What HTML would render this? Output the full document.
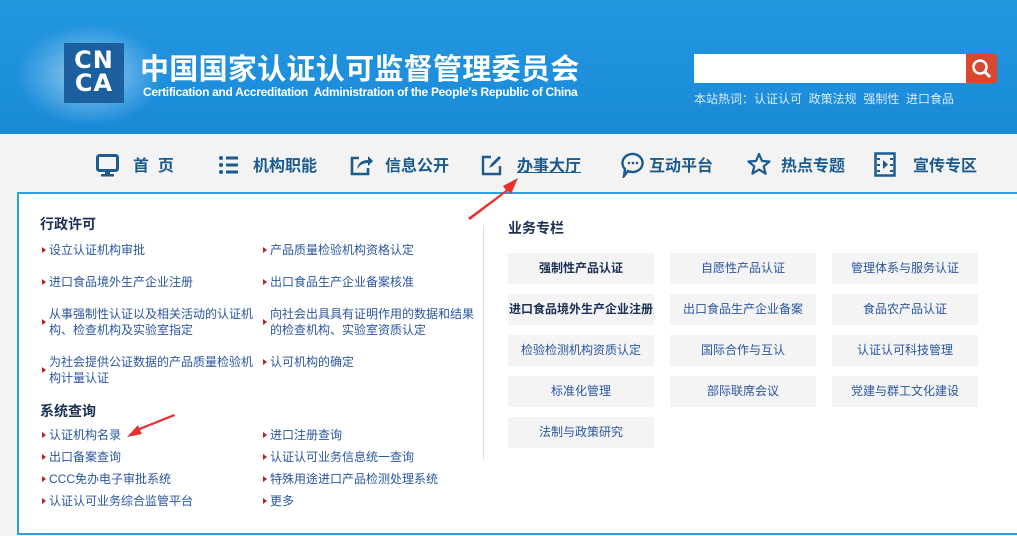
<!DOCTYPE html>
<html><head><meta charset="utf-8"><style>
*{margin:0;padding:0;box-sizing:border-box}
body{width:1017px;height:536px;overflow:hidden;font-family:"Liberation Sans","Noto Sans CJK SC",sans-serif;background:#f3f3f3;position:relative}
.hdr{position:absolute;left:0;top:0;width:1017px;height:134px;background:linear-gradient(180deg,#2596e0 0%,#1d8fdc 60%,#1a8ad8 100%)}
.glow{position:absolute;left:10px;top:20px;width:160px;height:110px;background:radial-gradient(ellipse at center,rgba(255,255,255,.55),rgba(255,255,255,0) 65%)}
.logo{position:absolute;left:64px;top:43px;width:60px;height:60px;background:#1b5f9e;color:#fff;font-weight:900;font-size:24px;line-height:23px;text-align:center;padding-top:6px;letter-spacing:1px;font-family:"DejaVu Sans",sans-serif}
.t1{position:absolute;left:140px;top:46px;color:#fff;font-size:29px;font-weight:bold;letter-spacing:0.3px;white-space:nowrap}
.t2{position:absolute;left:143px;top:85px;color:#fff;font-size:12px;font-weight:bold;letter-spacing:-0.3px;white-space:nowrap}
.search{position:absolute;left:694px;top:54px;width:272px;height:29px;background:#fff}
.sbtn{position:absolute;left:966px;top:54px;width:31px;height:29px;background:#d9472f}
.hot{position:absolute;left:694px;top:90px;color:#d9ecfa;font-size:12px;white-space:nowrap}
.nav{position:absolute;top:152px;font-size:16px;font-weight:bold;color:#1b5b8e;white-space:nowrap}
.box{position:absolute;left:17px;top:192px;width:1010px;height:343px;background:#fff;border:2px solid #2aa0de;border-right:none}
.h{position:absolute;font-size:14px;font-weight:bold;color:#1b3055}
.it{position:absolute;font-size:12px;color:#2a56a0;line-height:16px;white-space:nowrap}
.it:before{content:"";position:absolute;left:-7px;top:5px;border-left:4px solid #b3202a;border-top:3px solid transparent;border-bottom:3px solid transparent}
.it.m:before{top:13px}
.div{position:absolute;left:483px;top:225px;width:1px;height:234px;background:#ddd}
.b{position:absolute;width:146px;height:31px;background:#f4f4f4;font-size:12px;color:#2a56a0;text-align:center;line-height:31px;white-space:nowrap}
.b.k{font-weight:bold;color:#1b3055}
</style></head><body>
<div class="hdr"><div class="glow"></div>
<div class="logo">CN<br>CA</div>
<div class="t1">中国国家认证认可监督管理委员会</div>
<div class="t2">Certification and Accreditation&nbsp; Administration of the People's Republic of China</div>
<div class="search"></div>
<div class="sbtn"><svg width="31" height="29"><circle cx="14" cy="13" r="6.5" fill="none" stroke="#fff" stroke-width="2.5"/><line x1="19" y1="18" x2="24" y2="23" stroke="#fff" stroke-width="3"/></svg></div>
<div class="hot">本站热词：认证认可&nbsp; 政策法规&nbsp; 强制性&nbsp; 进口食品</div>
</div>
<svg style="position:absolute;left:96px;top:154px" width="24" height="24"><rect x="1.5" y="1.5" width="20" height="15" rx="2" fill="none" stroke="#1b5b8e" stroke-width="3"/><rect x="9" y="17" width="5" height="3" fill="#1b5b8e"/><rect x="5" y="20" width="13" height="2.5" fill="#1b5b8e"/></svg>
<div class="nav" style="left:133px">首&nbsp; 页</div>
<svg style="position:absolute;left:218px;top:154px" width="24" height="22"><g fill="#1b5b8e"><circle cx="3" cy="4" r="2"/><circle cx="3" cy="11" r="2"/><circle cx="3" cy="18" r="2"/><rect x="8" y="2.5" width="12" height="3"/><rect x="8" y="9.5" width="12" height="3"/><rect x="8" y="16.5" width="12" height="3"/></g></svg>
<div class="nav" style="left:253px">机构职能</div>
<svg style="position:absolute;left:349px;top:153px" width="24" height="24"><path d="M10 5H3v16h16v-6" fill="none" stroke="#1b5b8e" stroke-width="2.6"/><path d="M8 16c1-6 5-9 11-9V3l5 5-5 5V10c-5 0-8 2-11 6z" fill="#1b5b8e"/></svg>
<div class="nav" style="left:385px">信息公开</div>
<svg style="position:absolute;left:481px;top:154px" width="22" height="22"><path d="M10 3H2v17h17v-8" fill="none" stroke="#1b5b8e" stroke-width="2.4"/><path d="M8 14l2-4 8-8 2 2-8 8z" fill="#1b5b8e"/></svg>
<div class="nav" style="left:517px;text-decoration:underline">办事大厅</div>
<svg style="position:absolute;left:621px;top:152px" width="24" height="26"><path d="M12 2a10 9 0 1 1-5 17l-4 5 1-7A10 9 0 0 1 12 2z" fill="none" stroke="#1b5b8e" stroke-width="2.4"/><g fill="#1b5b8e"><circle cx="8" cy="11" r="1.3"/><circle cx="12" cy="11" r="1.3"/><circle cx="16" cy="11" r="1.3"/></g></svg>
<div class="nav" style="left:649px">互动平台</div>
<svg style="position:absolute;left:747px;top:152px" width="24" height="24"><path d="M12 2l3 7 7.5.5-5.8 4.8 1.9 7.4L12 17.6 5.4 21.7l1.9-7.4L1.5 9.5 9 9z" fill="none" stroke="#1b5b8e" stroke-width="2.2" stroke-linejoin="round"/></svg>
<div class="nav" style="left:781px">热点专题</div>
<svg style="position:absolute;left:874px;top:152px" width="22" height="25"><rect x="1.5" y="1.5" width="19" height="22" fill="none" stroke="#1b5b8e" stroke-width="2.5"/><g fill="#1b5b8e"><rect x="3" y="6" width="3" height="2"/><rect x="3" y="12" width="3" height="2"/><rect x="3" y="18" width="3" height="2"/><rect x="16" y="6" width="3" height="2"/><rect x="16" y="12" width="3" height="2"/><rect x="16" y="18" width="3" height="2"/><path d="M9 8l5 4.5-5 4.5z"/></g></svg>
<div class="nav" style="left:913px">宣传专区</div>

<div class="box"></div>
<div class="h" style="left:40px;top:214px">行政许可</div>
<div class="it" style="left:49px;top:242px">设立认证机构审批</div>
<div class="it" style="left:270px;top:242px">产品质量检验机构资格认定</div>
<div class="it" style="left:49px;top:274px">进口食品境外生产企业注册</div>
<div class="it" style="left:270px;top:274px">出口食品生产企业备案核准</div>
<div class="it m" style="left:49px;top:306px">从事强制性认证以及相关活动的认证机<br>构、检查机构及实验室指定</div>
<div class="it m" style="left:270px;top:306px">向社会出具具有证明作用的数据和结果<br>的检查机构、实验室资质认定</div>
<div class="it m" style="left:49px;top:354px">为社会提供公证数据的产品质量检验机<br>构计量认证</div>
<div class="it" style="left:270px;top:354px">认可机构的确定</div>
<div class="h" style="left:40px;top:401px">系统查询</div>
<div class="it" style="left:49px;top:427px">认证机构名录</div>
<div class="it" style="left:270px;top:427px">进口注册查询</div>
<div class="it" style="left:49px;top:449px">出口备案查询</div>
<div class="it" style="left:270px;top:449px">认证认可业务信息统一查询</div>
<div class="it" style="left:49px;top:471px">CCC免办电子审批系统</div>
<div class="it" style="left:270px;top:471px">特殊用途进口产品检测处理系统</div>
<div class="it" style="left:49px;top:493px">认证认可业务综合监管平台</div>
<div class="it" style="left:270px;top:493px">更多</div>
<div class="div"></div>
<div class="h" style="left:508px;top:218px">业务专栏</div>
<div class="b k" style="left:508px;top:253px">强制性产品认证</div>
<div class="b" style="left:670px;top:253px">自愿性产品认证</div>
<div class="b" style="left:832px;top:253px">管理体系与服务认证</div>
<div class="b k" style="left:508px;top:294px">进口食品境外生产企业注册</div>
<div class="b" style="left:670px;top:294px">出口食品生产企业备案</div>
<div class="b" style="left:832px;top:294px">食品农产品认证</div>
<div class="b" style="left:508px;top:335px">检验检测机构资质认定</div>
<div class="b" style="left:670px;top:335px">国际合作与互认</div>
<div class="b" style="left:832px;top:335px">认证认可科技管理</div>
<div class="b" style="left:508px;top:376px">标准化管理</div>
<div class="b" style="left:670px;top:376px">部际联席会议</div>
<div class="b" style="left:832px;top:376px">党建与群工文化建设</div>
<div class="b" style="left:508px;top:417px">法制与政策研究</div>
<svg style="position:absolute;left:0;top:0" width="1017" height="536"><polygon points="468,218 506,190 503,186 518,178 511,194 508,191 470,220" fill="#e8312f"/><polygon points="175,416 140,430 142,434 127,437 138,425 139,428 174,414" fill="#e8312f"/></svg>
</body></html>
